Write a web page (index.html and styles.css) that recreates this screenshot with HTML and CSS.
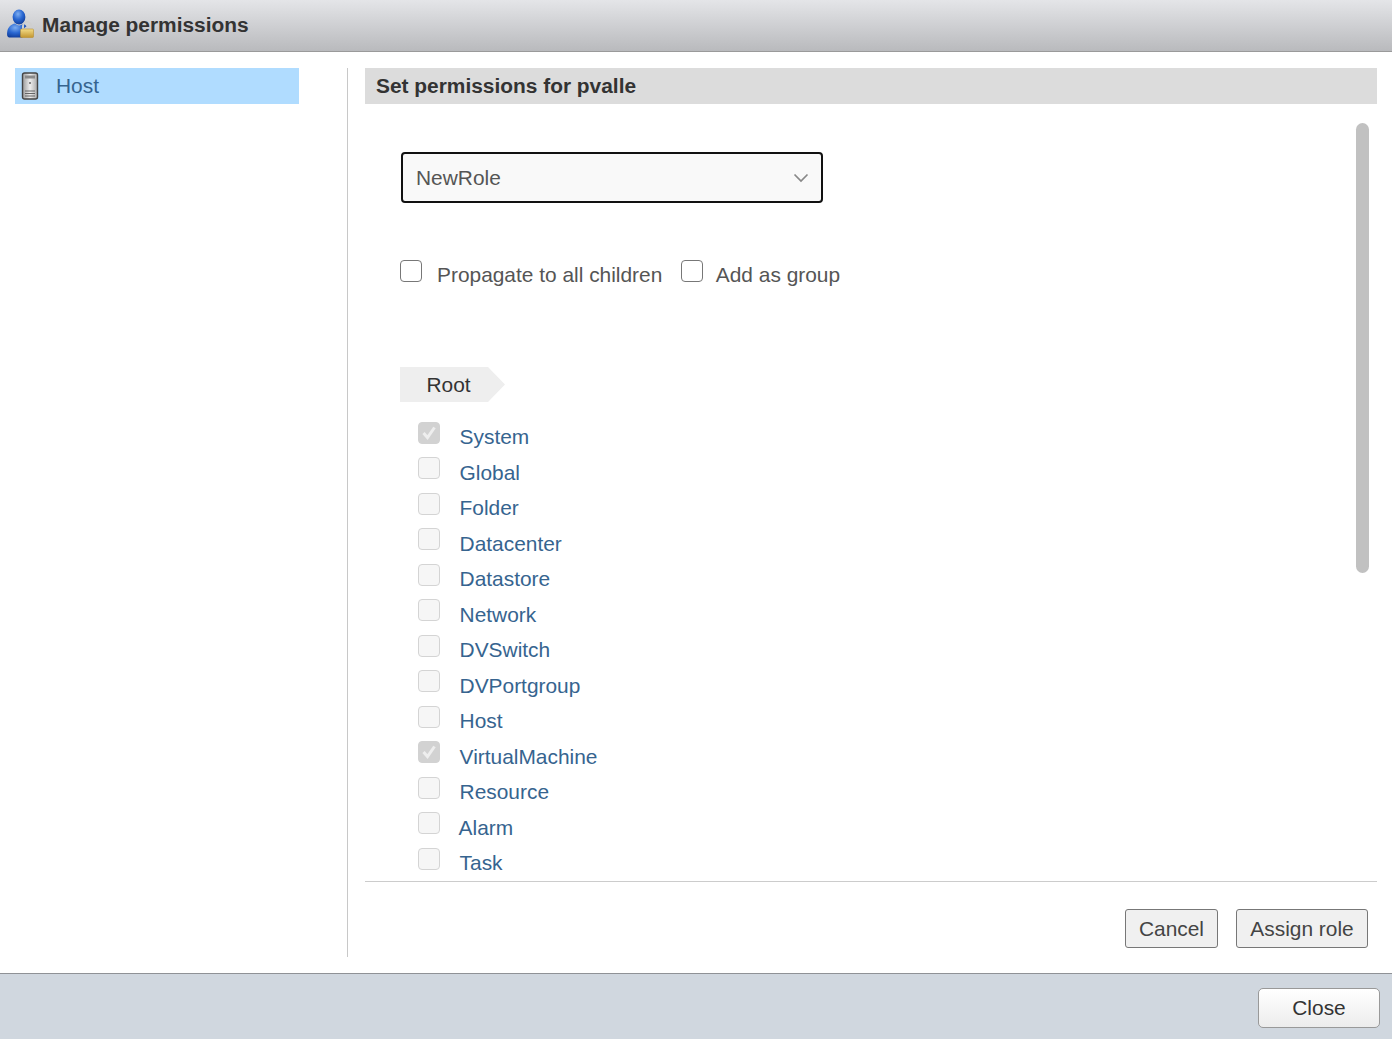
FILE: index.html
```html
<!DOCTYPE html>
<html lang="en">
<head>
<meta charset="utf-8">
<title>Manage permissions</title>
<link rel="stylesheet" href="styles.css">
</head>
<body>
<div class="dialog">
  <header class="titlebar">
    <svg class="title-icon" width="30" height="30" viewBox="0 0 30 30" aria-hidden="true">
      <defs>
        <radialGradient id="b" cx=".42" cy=".3" r=".75"><stop offset="0" stop-color="#7eaef0"/><stop offset=".5" stop-color="#2a68d2"/><stop offset="1" stop-color="#0f3a96"/></radialGradient>
        <linearGradient id="g" x1="0" y1="0" x2="0" y2="1"><stop offset="0" stop-color="#f3dc88"/><stop offset="1" stop-color="#c3962f"/></linearGradient>
      </defs>
      <ellipse cx="13" cy="9" rx="6.400" ry="7.400" fill="url(#b)"/>
      <path d="M3 29.500c-2-.5-2.200-3-1.800-5.500.6-4.500 3.700-8 8-8.500 2.500 2.500 5.500 2.500 7.800 0 1.500.6 2.700 1.600 3.500 2.800l-4 3.200v8z" fill="url(#b)"/>
      <path d="M17 21.500v-3.500a4 4 0 0 1 8 0v3.500" fill="none" stroke="#cfcfcf" stroke-width="2"/>
      <rect x="14.500" y="21" width="13" height="8.500" rx="1" fill="url(#g)" stroke="#b98f30" stroke-width=".6"/>
    </svg>
    <h1 class="title">Manage permissions</h1>
  </header>
  <div class="content">
    <aside class="sidebar">
      <div class="nav-item">
        <svg class="host-icon" width="18" height="28" viewBox="0 0 18 28" aria-hidden="true">
          <defs><linearGradient id="h" x1="0" y1="0" x2="1" y2="0"><stop offset="0" stop-color="#9a9a9a"/><stop offset=".5" stop-color="#eeeeee"/><stop offset="1" stop-color="#a8a8a8"/></linearGradient></defs>
          <rect x="1.500" y="1" width="15" height="26" rx="2" fill="url(#h)" stroke="#444" stroke-width="1.400"/>
          <rect x="4" y="3.500" width="10" height="3" fill="#8a8a8a"/>
          <circle cx="9" cy="11" r="1" fill="#666"/>
          <path d="M4 19h10M4 21.500h10M4 24h10" stroke="#666" stroke-width="1"/>
        </svg>
        <span class="nav-label">Host</span>
      </div>
    </aside>
    <main class="panel">
      <h2 class="panel-head">Set permissions for pvalle</h2>
      <div class="scroll-area">
        <div class="select">
          <span>NewRole</span>
          <svg width="16" height="10" viewBox="0 0 16 10" aria-hidden="true"><path d="M1.500 1.500 8 8l6.500-6.500" fill="none" stroke="#888" stroke-width="1.700"/></svg>
        </div>
        <div class="options">
          <label class="option"><span class="box"></span><span class="opt-text">Propagate to all children</span></label>
          <label class="option"><span class="box"></span><span class="opt-text add">Add as group</span></label>
        </div>
        <div class="crumb">Root</div>
        <ul class="tree">
          <li class="row"><span class="box disabled checked"><svg width="16" height="14" viewBox="0 0 16 14"><path d="M2.500 7 6.500 11.500 13.500 1.500" fill="none" stroke="#eeeeee" stroke-width="3"/></svg></span><span class="row-label">System</span></li>
          <li class="row"><span class="box disabled"></span><span class="row-label">Global</span></li>
          <li class="row"><span class="box disabled"></span><span class="row-label">Folder</span></li>
          <li class="row"><span class="box disabled"></span><span class="row-label">Datacenter</span></li>
          <li class="row"><span class="box disabled"></span><span class="row-label">Datastore</span></li>
          <li class="row"><span class="box disabled"></span><span class="row-label">Network</span></li>
          <li class="row"><span class="box disabled"></span><span class="row-label">DVSwitch</span></li>
          <li class="row"><span class="box disabled"></span><span class="row-label">DVPortgroup</span></li>
          <li class="row"><span class="box disabled"></span><span class="row-label">Host</span></li>
          <li class="row"><span class="box disabled checked"><svg width="16" height="14" viewBox="0 0 16 14"><path d="M2.500 7 6.500 11.500 13.500 1.500" fill="none" stroke="#eeeeee" stroke-width="3"/></svg></span><span class="row-label">VirtualMachine</span></li>
          <li class="row"><span class="box disabled"></span><span class="row-label">Resource</span></li>
          <li class="row"><span class="box disabled"></span><span class="row-label alarm">Alarm</span></li>
          <li class="row"><span class="box disabled"></span><span class="row-label">Task</span></li>
        </ul>
        <div class="scrollbar"></div>
      </div>
      <div class="actions">
        <button class="btn" type="button">Cancel</button>
        <button class="btn" type="button">Assign role</button>
      </div>
    </main>
  </div>
  <footer class="footer">
    <button class="close" type="button">Close</button>
  </footer>
</div>
</body>
</html>
```
FILE: styles.css
```css
* { box-sizing: border-box; }
html, body { margin: 0; padding: 0; height: 100%; }
body { font-family: "Liberation Sans", Arial, sans-serif; color: #333; background: #fff; overflow: hidden; }
.dialog { width: 1392px; height: 1039px; display: flex; flex-direction: column; }
.titlebar { height: 52px; flex: none; display: flex; align-items: center; padding: 0 0 2px 6px; gap: 6px; background: linear-gradient(#e4e5e8, #b9babd); border-bottom: 1px solid #9a9a9a; }
.title-icon { margin-top: -3px; }
.title { margin: 0; font-size: 20.900px; font-weight: bold; color: #333; }
.content { flex: 1; display: flex; padding: 16px 15px 16px 15px; min-height: 0; }
.sidebar { width: 333px; flex: none; border-right: 1px solid #c8c8c8; }
.nav-item { width: 284px; height: 36px; background: #b0dcff; display: flex; align-items: center; padding-left: 6px; }
.nav-label { margin-left: 17px; font-size: 20.900px; color: #36648f; }
.panel { flex: 1; margin-left: 17px; display: flex; flex-direction: column; min-width: 0; }
.panel-head { margin: 0; height: 36px; flex: none; background: #dcdcdc; font-size: 20.900px; font-weight: bold; line-height: 36px; padding-left: 11px; color: #333; }
.scroll-area { position: relative; overflow: hidden; padding: 48px 0 0 36px; border-bottom: 1px solid #ccc; flex: 0 0 778px; min-height: 0; }
.select { width: 422px; height: 51px; border: 2px solid #111; border-radius: 4px; background: #f9f9f9; display: flex; align-items: center; justify-content: space-between; padding: 0 12px 0 13px; font-size: 20.900px; color: #555; }
.options { display: flex; margin-top: 57px; height: 30px; margin-left: -1px; }
.option { display: flex; }
.box { width: 22px; height: 22px; flex: none; border: 1px solid #777; border-radius: 4px; background: #fff; display: flex; align-items: center; justify-content: center; }
.opt-text { margin: 2px 18.500px 0 15px; font-size: 20.900px; line-height: 26px; color: #555; }
.opt-text.add { margin-left: 13px; }
.crumb { margin-top: 77px; margin-left: -1px; width: 105px; height: 35px; line-height: 36px; padding-left: 26.500px; font-size: 20.900px; color: #333; background: #eeeeee; clip-path: polygon(0 0, 88px 0, 105px 50%, 88px 100%, 0 100%); }
.tree { list-style: none; margin: 19.600px 0 0 17px; padding: 0; }
.row { display: flex; height: 35.500px; }
.box.disabled { border-color: #d4d4d4; background: #f6f6f6; }
.box.checked { background: #d2d2d2; border-color: #d2d2d2; }
.row-label { margin: 2.500px 0 0 19.600px; font-size: 20.900px; line-height: 26px; color: #36648f; }
.row-label.alarm { margin-left: 18.600px; }
.scrollbar { position: absolute; top: 19px; right: 8px; width: 13px; height: 450px; background: #c1c1c1; border-radius: 7px; }
.actions { flex: 1; display: flex; justify-content: flex-end; gap: 18px; padding: 27px 9px 0 0; }
.btn { width: 93px; height: 39px; padding: 0; background: #f0f0f0; border: 1px solid #777; border-radius: 3px; font: 20.900px "Liberation Sans", Arial, sans-serif; color: #444; }
.btn + .btn { width: 132px; }
.footer { height: 66px; flex: none; background: #d0d7df; border-top: 1px solid #8f9296; display: flex; justify-content: flex-end; padding: 14px 12px 0 0; }
.close { width: 122px; height: 40px; padding: 0; background: linear-gradient(#fff, #ececec); border: 1px solid #999; border-radius: 5px; font: 20.900px "Liberation Sans", Arial, sans-serif; color: #333; }
```
